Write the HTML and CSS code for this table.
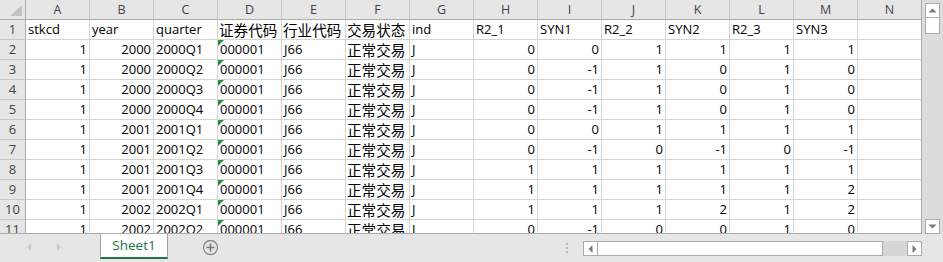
FILE: index.html
```html
<!DOCTYPE html>
<html lang="zh-CN">
<head>
<meta charset="utf-8">
<title>Sheet1</title>
<link rel="stylesheet" href="styles.css">
</head>
<body>
<div class="app">
  <div class="sheet">
    <div class="corner"><svg width="25" height="19" viewBox="0 0 25 19"><polygon points="10,16 22,16 22,5" fill="#c3c3c3"/></svg></div>
    <div class="ch">A</div><div class="ch">B</div><div class="ch">C</div><div class="ch">D</div><div class="ch">E</div><div class="ch">F</div><div class="ch">G</div><div class="ch">H</div><div class="ch">I</div><div class="ch">J</div><div class="ch">K</div><div class="ch">L</div><div class="ch">M</div><div class="ch last">N</div>

    <div class="rh">1</div><div class="c">stkcd</div><div class="c">year</div><div class="c">quarter</div><div class="c cjk">证券代码</div><div class="c cjk">行业代码</div><div class="c cjk">交易状态</div><div class="c">ind</div><div class="c">R2_1</div><div class="c">SYN1</div><div class="c">R2_2</div><div class="c">SYN2</div><div class="c">R2_3</div><div class="c">SYN3</div><div class="c last"></div>

    <div class="rh">2</div><div class="c n">1</div><div class="c n">2000</div><div class="c">2000Q1</div><div class="c flag">000001</div><div class="c">J66</div><div class="c cjk">正常交易</div><div class="c">J</div><div class="c n">0</div><div class="c n">0</div><div class="c n">1</div><div class="c n">1</div><div class="c n">1</div><div class="c n">1</div><div class="c last"></div>

    <div class="rh">3</div><div class="c n">1</div><div class="c n">2000</div><div class="c">2000Q2</div><div class="c flag">000001</div><div class="c">J66</div><div class="c cjk">正常交易</div><div class="c">J</div><div class="c n">0</div><div class="c n">-1</div><div class="c n">1</div><div class="c n">0</div><div class="c n">1</div><div class="c n">0</div><div class="c last"></div>

    <div class="rh">4</div><div class="c n">1</div><div class="c n">2000</div><div class="c">2000Q3</div><div class="c flag">000001</div><div class="c">J66</div><div class="c cjk">正常交易</div><div class="c">J</div><div class="c n">0</div><div class="c n">-1</div><div class="c n">1</div><div class="c n">0</div><div class="c n">1</div><div class="c n">0</div><div class="c last"></div>

    <div class="rh">5</div><div class="c n">1</div><div class="c n">2000</div><div class="c">2000Q4</div><div class="c flag">000001</div><div class="c">J66</div><div class="c cjk">正常交易</div><div class="c">J</div><div class="c n">0</div><div class="c n">-1</div><div class="c n">1</div><div class="c n">0</div><div class="c n">1</div><div class="c n">0</div><div class="c last"></div>

    <div class="rh">6</div><div class="c n">1</div><div class="c n">2001</div><div class="c">2001Q1</div><div class="c flag">000001</div><div class="c">J66</div><div class="c cjk">正常交易</div><div class="c">J</div><div class="c n">0</div><div class="c n">0</div><div class="c n">1</div><div class="c n">1</div><div class="c n">1</div><div class="c n">1</div><div class="c last"></div>

    <div class="rh">7</div><div class="c n">1</div><div class="c n">2001</div><div class="c">2001Q2</div><div class="c flag">000001</div><div class="c">J66</div><div class="c cjk">正常交易</div><div class="c">J</div><div class="c n">0</div><div class="c n">-1</div><div class="c n">0</div><div class="c n">-1</div><div class="c n">0</div><div class="c n">-1</div><div class="c last"></div>

    <div class="rh">8</div><div class="c n">1</div><div class="c n">2001</div><div class="c">2001Q3</div><div class="c flag">000001</div><div class="c">J66</div><div class="c cjk">正常交易</div><div class="c">J</div><div class="c n">1</div><div class="c n">1</div><div class="c n">1</div><div class="c n">1</div><div class="c n">1</div><div class="c n">1</div><div class="c last"></div>

    <div class="rh">9</div><div class="c n">1</div><div class="c n">2001</div><div class="c">2001Q4</div><div class="c flag">000001</div><div class="c">J66</div><div class="c cjk">正常交易</div><div class="c">J</div><div class="c n">1</div><div class="c n">1</div><div class="c n">1</div><div class="c n">1</div><div class="c n">1</div><div class="c n">2</div><div class="c last"></div>

    <div class="rh">10</div><div class="c n">1</div><div class="c n">2002</div><div class="c">2002Q1</div><div class="c flag">000001</div><div class="c">J66</div><div class="c cjk">正常交易</div><div class="c">J</div><div class="c n">1</div><div class="c n">1</div><div class="c n">1</div><div class="c n">2</div><div class="c n">1</div><div class="c n">2</div><div class="c last"></div>

    <div class="rh">11</div><div class="c n">1</div><div class="c n">2002</div><div class="c">2002Q2</div><div class="c flag">000001</div><div class="c">J66</div><div class="c cjk">正常交易</div><div class="c">J</div><div class="c n">0</div><div class="c n">-1</div><div class="c n">0</div><div class="c n">0</div><div class="c n">1</div><div class="c n">0</div><div class="c last"></div>
  </div>

  <div class="vscroll">
    <div class="sbtn"><svg width="9" height="5" viewBox="0 0 9 5"><polygon points="0.5,4.5 8.5,4.5 4.5,0.5" fill="#7a7a7a"/></svg></div>
    <div class="vthumb"></div>
    <div class="sbtn down"><svg width="9" height="5" viewBox="0 0 9 5"><polygon points="0.5,0.5 8.5,0.5 4.5,4.5" fill="#7a7a7a"/></svg></div>
  </div>

  <div class="tabbar">
    <div class="nav">
      <svg width="5" height="8" viewBox="0 0 5 8"><polygon points="4,0 4,8 0,4" fill="#c8c8c8"/></svg>
      <svg width="5" height="8" viewBox="0 0 5 8"><polygon points="1,0 1,8 5,4" fill="#c8c8c8"/></svg>
    </div>
    <div class="tab">Sheet1</div>
    <div class="add"><svg width="17" height="17" viewBox="0 0 17 17"><circle cx="8.5" cy="8.5" r="7" fill="none" stroke="#8a8a8a" stroke-width="1.3"/><path d="M8.5 4.5v8M4.5 8.5h8" stroke="#7a7a7a" stroke-width="1.6"/></svg></div>
    <div class="dots"><i></i><i></i><i></i></div>
    <div class="hscroll">
      <div class="hbtn"><svg width="5" height="8" viewBox="0 0 5 8"><polygon points="4.5,0 4.5,8 0.5,4" fill="#7a7a7a"/></svg></div>
      <div class="hthumb"></div>
      <div class="htrack"></div>
      <div class="hbtn"><svg width="5" height="8" viewBox="0 0 5 8"><polygon points="0.5,0 0.5,8 4.5,4" fill="#7a7a7a"/></svg></div>
    </div>
  </div>
</div>
</body>
</html>
```

FILE: styles.css
```css
* { box-sizing: border-box; }

html, body {
  margin: 0;
  padding: 0;
}

body {
  font-family: "Open Sans", "Noto Sans CJK SC", sans-serif;
  font-size: 13px;
  background: #e6e6e6;
}

.app {
  display: grid;
  grid-template-columns: 922px 21px;
  grid-template-rows: 234px 28px;
  width: 943px;
  height: 262px;
  background: #e6e6e6;
}

/* ---------- sheet grid ---------- */
.sheet {
  display: grid;
  grid-template-columns: 26px repeat(13, 64px) 63px;
  grid-auto-rows: 20px;
  overflow: hidden;
  background: #fff;
  border-right: 1px solid #ababab;
  border-bottom: 1px solid #ababab;
}

.corner {
  background: #e6e6e6;
  border-right: 1px solid #ababab;
  border-bottom: 1px solid #ababab;
}
.corner svg { display: block; }

.ch {
  background: #e6e6e6;
  border-right: 1px solid #c8c8c8;
  border-bottom: 1px solid #ababab;
  color: #444;
  font-size: 12.5px;
  line-height: 19px;
  text-align: center;
}

.rh {
  background: #e6e6e6;
  border-right: 1px solid #ababab;
  border-bottom: 1px solid #c8c8c8;
  color: #444;
  font-size: 13px;
  line-height: 19px;
  text-align: center;
}

.c {
  border-right: 1px solid #d4d4d4;
  border-bottom: 1px solid #d4d4d4;
  padding: 0 2px;
  line-height: 19px;
  white-space: nowrap;
  overflow: hidden;
  color: #000;
}

.n {
  text-align: right;
  padding-right: 2px;
}

.cjk {
  font-family: "Noto Sans CJK SC", sans-serif;
  font-size: 14.6px;
  padding-left: 1px;
}

.last { border-right: none; }

.flag { position: relative; }
.flag::before {
  content: "";
  position: absolute;
  left: 0;
  top: 0;
  border-top: 6px solid #24903c;
  border-right: 6px solid transparent;
}

/* ---------- vertical scrollbar ---------- */
.vscroll {
  display: flex;
  flex-direction: column;
  padding: 3px 0 0 3px;
  background: #dcdcdc;
}

.sbtn {
  width: 15px;
  height: 15px;
  border: 1px solid #ababab;
  background: #fff;
  display: flex;
  align-items: center;
  justify-content: center;
}
.sbtn svg { display: block; }
.sbtn.down { margin-top: auto; }

.vthumb {
  width: 15px;
  height: 17px;
  margin-top: -1px;
  border: 1px solid #ababab;
  background: #fff;
}

/* ---------- tab bar ---------- */
.tabbar {
  grid-column: 1 / 3;
  display: flex;
  align-items: flex-start;
  background: #e6e6e6;
}

.nav {
  width: 100px;
  height: 26px;
  display: flex;
  align-items: center;
  gap: 24px;
  padding-left: 27px;
}
.nav svg { display: block; }

.tab {
  width: 68px;
  height: 25px;
  background: #fff;
  border-left: 1px solid #a6a6a6;
  border-right: 1px solid #a6a6a6;
  border-bottom: 2px solid #217346;
  color: #217346;
  font-size: 13.5px;
  line-height: 23px;
  text-align: center;
}

.add {
  margin-left: 34px;
  margin-top: 5px;
}
.add svg { display: block; }

.dots {
  margin-left: auto;
  margin-right: 15px;
  margin-top: 9px;
  width: 2px;
  display: flex;
  flex-direction: column;
  gap: 2px;
}
.dots i {
  display: block;
  width: 2px;
  height: 2px;
  background: #bdbdbd;
}

.hscroll {
  width: 339px;
  height: 15px;
  margin-top: 7px;
  margin-right: 21px;
  display: flex;
}

.hbtn {
  width: 15px;
  height: 15px;
  border: 1px solid #ababab;
  background: #fff;
  display: flex;
  align-items: center;
  justify-content: center;
}
.hbtn svg { display: block; }

.hthumb {
  width: 286px;
  margin-left: -1px;
  border: 1px solid #ababab;
  background: #fff;
}

.htrack {
  flex: 1;
  background: #d6d6d6;
}
```
